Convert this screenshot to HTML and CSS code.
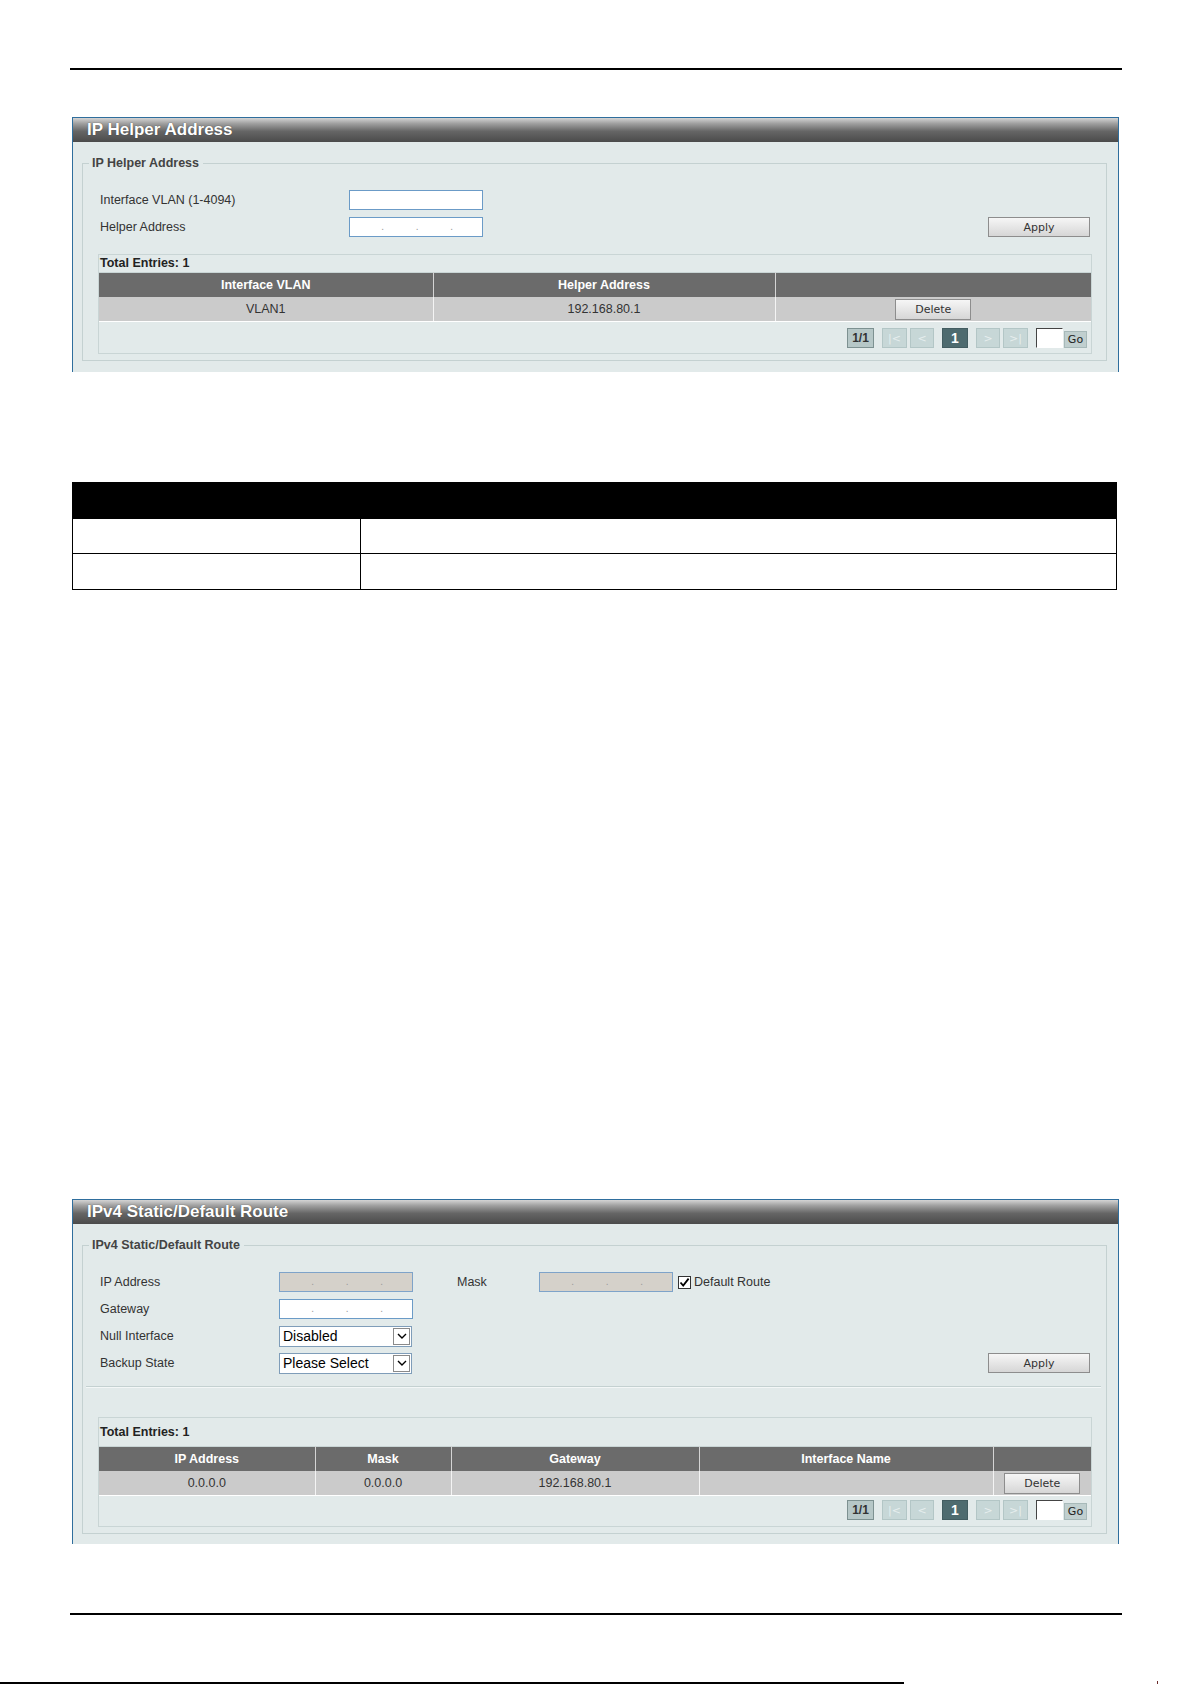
FILE: index.html
```html
<!DOCTYPE html>
<html lang="en">
<head>
<meta charset="UTF-8">
<meta name="viewport" content="width=device-width, initial-scale=1.0">
<title>IP Helper Address / IPv4 Static Route</title>
<link rel="stylesheet" href="styles.css">
</head>
<body>
    <div class="page-rule"></div>

    <!-- IP Helper Address -->
    <div class="panel panel-helper">
        <div class="panel-title">IP Helper Address</div>
        <div class="panel-body">
            <fieldset class="group">
                <legend>IP Helper Address</legend>
                <div class="form-row">
                    <label class="form-label label-wide" for="helperVlan">Interface VLAN (1-4094)</label>
                    <input class="text-field" type="text" id="helperVlan">
                </div>
                <div class="form-row">
                    <label class="form-label label-wide">Helper Address</label>
                    <div class="ip-field">
                        <input type="text"><span class="ip-dot">.</span><input type="text"><span class="ip-dot">.</span><input type="text"><span class="ip-dot">.</span><input type="text">
                    </div>
                    <button class="btn btn-apply" type="button">Apply</button>
                </div>

                <div class="entries">
                    <div class="entries-total">Total Entries: 1</div>
                    <table class="grid">
                        <colgroup>
                            <col style="width: 334px">
                            <col style="width: 342px">
                            <col>
                        </colgroup>
                        <tr>
                            <th>Interface VLAN</th>
                            <th>Helper Address</th>
                            <th></th>
                        </tr>
                        <tr>
                            <td>VLAN1</td>
                            <td>192.168.80.1</td>
                            <td><button class="btn btn-delete" type="button">Delete</button></td>
                        </tr>
                    </table>
                    <div class="pager">
                        <span class="pg pg-count">1/1</span>
                        <span class="pg pg-off pg-first">|&lt;</span>
                        <span class="pg pg-off pg-prev">&lt;</span>
                        <span class="pg pg-current">1</span>
                        <span class="pg pg-off pg-next">&gt;</span>
                        <span class="pg pg-off pg-last">&gt;|</span>
                        <input class="pg-input" type="text">
                        <button class="pg-go" type="button">Go</button>
                    </div>
                </div>
            </fieldset>
        </div>
    </div>

    <table class="doc-table">
        <colgroup>
            <col style="width: 288px">
            <col>
        </colgroup>
        <tr class="doc-head">
            <th></th>
            <th></th>
        </tr>
        <tr class="doc-row-a">
            <td></td>
            <td></td>
        </tr>
        <tr class="doc-row-b">
            <td></td>
            <td></td>
        </tr>
    </table>

    <!-- IPv4 Static/Default Route -->
    <div class="panel panel-route">
        <div class="panel-title">IPv4 Static/Default Route</div>
        <div class="panel-body">
            <fieldset class="group">
                <legend>IPv4 Static/Default Route</legend>
                <div class="form-row">
                    <label class="form-label label-narrow">IP Address</label>
                    <div class="ip-field ip-disabled">
                        <input type="text" disabled><span class="ip-dot">.</span><input type="text" disabled><span class="ip-dot">.</span><input type="text" disabled><span class="ip-dot">.</span><input type="text" disabled>
                    </div>
                    <label class="form-label label-mask">Mask</label>
                    <div class="ip-field ip-disabled">
                        <input type="text" disabled><span class="ip-dot">.</span><input type="text" disabled><span class="ip-dot">.</span><input type="text" disabled><span class="ip-dot">.</span><input type="text" disabled>
                    </div>
                    <span class="check-box">
                        <svg width="11" height="11" viewBox="0 0 11 11"><path d="M1.5 5.5 L4.2 8.6 L9.6 1.6" fill="none" stroke="#000" stroke-width="1.8"/></svg>
                    </span>
                    <span class="check-label">Default Route</span>
                </div>
                <div class="form-row">
                    <label class="form-label label-narrow">Gateway</label>
                    <div class="ip-field">
                        <input type="text"><span class="ip-dot">.</span><input type="text"><span class="ip-dot">.</span><input type="text"><span class="ip-dot">.</span><input type="text">
                    </div>
                </div>
                <div class="form-row">
                    <label class="form-label label-narrow">Null Interface</label>
                    <div class="select-wrap">
                        <select class="select-field">
                            <option>Disabled</option>
                            <option>Enabled</option>
                        </select>
                        <span class="select-arrow">
                            <svg width="12" height="12" viewBox="0 0 12 12"><path d="M2 4 L6 8 L10 4" fill="none" stroke="#000" stroke-width="1.4"/></svg>
                        </span>
                    </div>
                </div>
                <div class="form-row">
                    <label class="form-label label-narrow">Backup State</label>
                    <div class="select-wrap">
                        <select class="select-field">
                            <option>Please Select</option>
                            <option>Primary</option>
                            <option>Backup</option>
                        </select>
                        <span class="select-arrow">
                            <svg width="12" height="12" viewBox="0 0 12 12"><path d="M2 4 L6 8 L10 4" fill="none" stroke="#000" stroke-width="1.4"/></svg>
                        </span>
                    </div>
                    <button class="btn btn-apply" type="button">Apply</button>
                </div>

                <hr class="group-sep">

                <div class="entries entries-tall">
                    <div class="entries-total">Total Entries: 1</div>
                    <table class="grid">
                        <colgroup>
                            <col style="width: 216px">
                            <col style="width: 136px">
                            <col style="width: 248px">
                            <col style="width: 294px">
                            <col>
                        </colgroup>
                        <tr>
                            <th>IP Address</th>
                            <th>Mask</th>
                            <th>Gateway</th>
                            <th>Interface Name</th>
                            <th></th>
                        </tr>
                        <tr>
                            <td>0.0.0.0</td>
                            <td>0.0.0.0</td>
                            <td>192.168.80.1</td>
                            <td></td>
                            <td><button class="btn btn-delete" type="button">Delete</button></td>
                        </tr>
                    </table>
                    <div class="pager">
                        <span class="pg pg-count">1/1</span>
                        <span class="pg pg-off pg-first">|&lt;</span>
                        <span class="pg pg-off pg-prev">&lt;</span>
                        <span class="pg pg-current">1</span>
                        <span class="pg pg-off pg-next">&gt;</span>
                        <span class="pg pg-off pg-last">&gt;|</span>
                        <input class="pg-input" type="text">
                        <button class="pg-go" type="button">Go</button>
                    </div>
                </div>
            </fieldset>
        </div>
    </div>

    <div class="page-rule page-rule-bottom"></div>

    <div class="page-foot">
        <div class="foot-line"></div>
        <span class="foot-tick"></span>
    </div>
</body>
</html>
```

FILE: styles.css
```css
body {
    font-family: "Liberation Sans", Arial, sans-serif;
    font-size: 12.5px;
    color: #333;
    background-color: #fff;
    margin: 0;
    padding: 0;
}

/* page header / footer rules */
.page-rule {
    margin: 68px 0 0 70px;
    width: 1052px;
    height: 2px;
    background-color: #000;
}

.page-rule-bottom {
    margin-top: 69px;
}

.page-foot {
    display: flex;
    align-items: flex-end;
    margin-top: 67px;
    height: 2px;
}

.foot-line {
    width: 904px;
    height: 2px;
    background-color: #000;
}

.foot-tick {
    width: 1px;
    height: 3px;
    margin-left: 253px;
    background-color: #6b2a2a;
}

/* panels */
.panel {
    width: 1047px;
    margin-left: 72px;
    box-sizing: border-box;
    border: 1px solid #2f6e9d;
    border-bottom: none;
    background-color: #e2eaea;
}

.panel-helper {
    margin-top: 47px;
}

.panel-route {
    margin-top: 609px;
}

.panel-title {
    height: 24px;
    line-height: 23px;
    padding-left: 14px;
    font-size: 17px;
    font-weight: bold;
    color: #fff;
    background: linear-gradient(to bottom, #d4d4d4 0%, #a2a2a2 22%, #666 55%, #4b4b4b 100%);
    text-shadow: 0 0 1px #333;
}

.panel-body {
    padding: 14px 11px 11px 9px;
}

.panel-route .panel-body {
    padding-bottom: 10px;
}

.group {
    margin: 0;
    padding: 19px 14px 6px 6px;
    border: 1px solid #c4d1d1;
    min-width: 0;
}

.group legend {
    padding: 0 4px 0 3px;
    line-height: 14px;
    font-size: 12.5px;
    font-weight: bold;
    color: #444;
}

/* form rows */
.form-row {
    display: flex;
    align-items: center;
    height: 22px;
    margin-bottom: 5px;
    padding: 0 2px 0 11px;
}

.form-label {
    flex: none;
    font-size: 12.5px;
    color: #333;
}

.label-wide {
    width: 249px;
}

.label-narrow {
    width: 179px;
}

.label-mask {
    width: 82px;
    margin-left: 44px;
}

.text-field {
    width: 134px;
    height: 20px;
    box-sizing: border-box;
    border: 1px solid #6b9bc7;
    background: #fff;
    padding: 0 3px;
    font-size: 12px;
}

.ip-field {
    display: flex;
    align-items: center;
    width: 134px;
    height: 20px;
    box-sizing: border-box;
    border: 1px solid #6b9bc7;
    background: #fff;
}

.ip-field input {
    width: 31px;
    height: 18px;
    border: none;
    padding: 0;
    background: transparent;
    font-size: 12px;
    text-align: center;
}

.ip-field input:last-child {
    flex: 1;
    width: auto;
    min-width: 0;
}

.ip-dot {
    width: 3.5px;
    text-align: center;
    font-size: 10px;
    line-height: 10px;
    color: #9a9a9a;
}

.ip-disabled {
    background: #d5d1ca;
    border-color: #7ea3c9;
}

.check-box {
    display: flex;
    align-items: center;
    justify-content: center;
    width: 13px;
    height: 13px;
    margin-left: 5px;
    box-sizing: border-box;
    border: 1px solid #333;
    background: #fff;
}

.check-label {
    margin-left: 3px;
    font-size: 12.5px;
    color: #333;
}

.select-wrap {
    position: relative;
    width: 133px;
    height: 21px;
}

.select-field {
    appearance: none;
    -webkit-appearance: none;
    width: 100%;
    height: 100%;
    box-sizing: border-box;
    margin: 0;
    border: 1px solid #7f9db9;
    border-radius: 0;
    padding: 0 0 0 3px;
    background: #fff;
    font-family: "Liberation Sans", Arial, sans-serif;
    font-size: 14px;
    color: #000;
}

/* arrow box drawn over the right end of the select */
.select-arrow {
    position: absolute;
    top: 2px;
    right: 2px;
    width: 17px;
    height: 17px;
    box-sizing: border-box;
    border: 1px solid #8a8a8a;
    background: #fff;
    display: flex;
    align-items: center;
    justify-content: center;
    pointer-events: none;
}

/* buttons */
.btn {
    font-family: "DejaVu Sans", Tahoma, sans-serif;
    font-size: 11px;
    color: #333;
    border: 1px solid #8d8d8d;
    background: linear-gradient(to bottom, #f6f6f6 0%, #e6e6e6 50%, #d6d6d6 100%);
    padding: 0;
    cursor: pointer;
}

.btn-apply {
    width: 102px;
    height: 20px;
    margin-left: auto;
}

.btn-delete {
    width: 76px;
    height: 21px;
    vertical-align: middle;
}

.group-sep {
    margin: 12px -9px 0 -3px;
    border: none;
    border-top: 1px solid #c4d1d1;
    border-bottom: 1px solid #f3f7f7;
}

/* entries table */
.entries {
    margin: 16px 0 0 9px;
    border: 1px solid #c9d5d5;
}

.entries-tall {
    margin-top: 29px;
}

.entries-total {
    height: 17px;
    line-height: 17px;
    padding-left: 1px;
    font-weight: bold;
    font-size: 12.5px;
    color: #222;
}

.entries-tall .entries-total {
    height: 28px;
    line-height: 26px;
    padding-top: 1px;
    box-sizing: border-box;
}

.grid {
    width: 100%;
    border-collapse: collapse;
    table-layout: fixed;
}

.grid th {
    height: 24px;
    padding: 0;
    background-color: #6b6b6b;
    color: #fff;
    font-weight: bold;
    font-size: 12.5px;
    text-align: center;
    border-right: 1px solid #d4d4d4;
    border-top: 1px solid #c9d5d5;
}

.grid td {
    height: 24px;
    padding: 0;
    background-color: #cbcbcb;
    color: #333;
    font-size: 12.5px;
    text-align: center;
    border-right: 1px solid #f4f4f4;
    border-bottom: 1px solid #fff;
}

.grid th:last-child,
.grid td:last-child {
    border-right: none;
}

/* pager */
.pager {
    display: flex;
    align-items: flex-start;
    justify-content: flex-end;
    height: 31px;
    box-sizing: border-box;
    padding: 6px 4px 0 0;
}

.entries-tall .pager {
    height: 30px;
    padding-top: 4px;
}

.pg {
    height: 20px;
    box-sizing: border-box;
    display: flex;
    align-items: center;
    justify-content: center;
    font-size: 12px;
}

.pg-count {
    width: 27px;
    background: #b6c7c7;
    border: 1px solid #7d9191;
    font-weight: bold;
    color: #333;
}

.pg-off {
    width: 25px;
    background: #c7d7d7;
    border: 1px solid #b3c6c6;
    color: #e6eeee;
    font-family: "DejaVu Sans", Tahoma, sans-serif;
    font-size: 11px;
}

.pg-first {
    margin-left: 8px;
}

.pg-prev {
    width: 24px;
    margin-left: 3px;
}

.pg-current {
    width: 26px;
    margin-left: 8px;
    background: #4e6b6f;
    border: 1px solid #435d61;
    color: #fff;
    font-weight: bold;
    font-size: 14px;
}

.pg-next {
    width: 24px;
    margin-left: 8px;
}

.pg-last {
    margin-left: 3px;
}

.pg-input {
    width: 27px;
    height: 20px;
    box-sizing: border-box;
    margin-left: 8px;
    padding: 0;
    border: 1px solid #fff;
    border-top-color: #444;
    border-left-color: #444;
    background: #fff;
}

.pg-go {
    width: 23px;
    height: 17px;
    margin: 3px 0 0 1px;
    padding: 0;
    box-sizing: border-box;
    border: 1px solid #a7b9b9;
    background: #c0cfcf;
    font-family: "DejaVu Sans", Tahoma, sans-serif;
    font-size: 11px;
    color: #222;
}

/* plain description table between the panels */
.doc-table {
    width: 1045px;
    margin: 110px 0 0 72px;
    border-collapse: collapse;
    table-layout: fixed;
}

.doc-table th,
.doc-table td {
    border: 1px solid #000;
    padding: 0;
}

.doc-head th {
    height: 35px;
    background-color: #000;
}

.doc-row-a td {
    height: 34px;
}

.doc-row-b td {
    height: 35px;
}
```
